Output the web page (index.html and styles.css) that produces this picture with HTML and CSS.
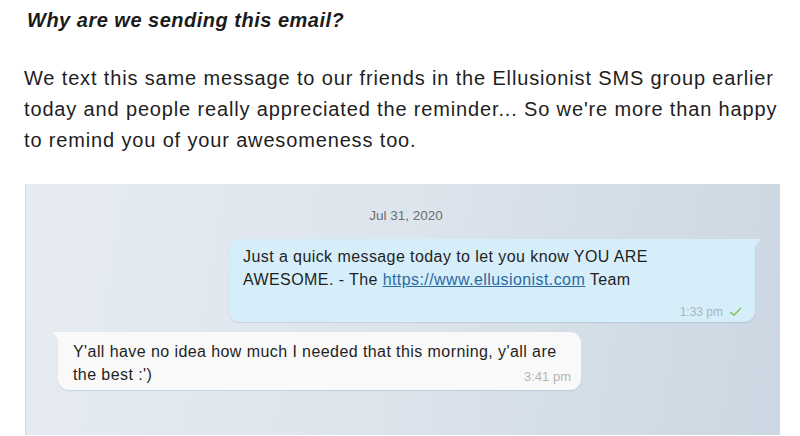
FILE: index.html
```html
<!DOCTYPE html>
<html>
<head>
    <meta charset="UTF-8">
    <title>Why are we sending this email?</title>
    <link rel="stylesheet" href="styles.css">
</head>
<body>
    <div class="email">
        <h2 class="email-title">Why are we sending this email?</h2>
        <p class="email-text">We text this same message to our friends in the Ellusionist SMS group earlier today and people really appreciated the reminder... So we're more than happy to remind you of your awesomeness too.</p>

        <div class="chat-shot">
            <div class="chat-date">Jul 31, 2020</div>

            <div class="bubble bubble-out">
                <div class="bubble-text">Just a quick message today to let you know YOU ARE<br>AWESOME. - The <a href="#">https://www.ellusionist.com</a> Team</div>
                <div class="bubble-meta">
                    <span class="bubble-time">1:33 pm</span>
                    <svg class="bubble-check" width="13" height="10" viewBox="0 0 13 10">
                        <polyline points="1.5,5.2 4.8,8.2 11.5,1.5" fill="none" stroke="#7cc457" stroke-width="1.4" stroke-linecap="round" stroke-linejoin="round"/>
                    </svg>
                </div>
            </div>

            <div class="bubble bubble-in">
                <div class="bubble-text">Y'all have no idea how much I needed that this morning, y'all are<br>the best :')<span class="bubble-time bubble-time-inline">3:41 pm</span></div>
            </div>
        </div>
    </div>
</body>
</html>
```

FILE: styles.css
```css
body {
    margin: 0;
    padding: 0;
    background-color: #fff;
    font-family: "Liberation Sans", Arial, sans-serif;
    color: #1d1d1d;
}
.email {
    padding: 9px 0 0 24px;
}
.email-title {
    margin: 0 0 0 3px;
    font-size: 20px;
    font-weight: bold;
    font-style: italic;
    letter-spacing: 0.5px;
    line-height: 22px;
    color: #1b1b1b;
}
.email-text {
    margin: 32px 0 0 0;
    font-size: 20px;
    line-height: 31px;
    letter-spacing: 0.85px;
    color: #1e1e1e;
}
.chat-shot {
    display: flex;
    flex-direction: column;
    margin: 28px 0 0 1px;
    width: 755px;
    height: 251px;
    box-sizing: border-box;
    padding-top: 24px;
    background: linear-gradient(100deg, #e7ecf2 0%, #dce4ec 50%, #cbd7e2 100%);
    border-left: 1px solid #d5dbe2;
}
.chat-date {
    text-align: center;
    font-size: 13.5px;
    line-height: 16px;
    color: #6e6e6e;
    padding-left: 6px;
}
.bubble {
    position: relative;
    box-sizing: border-box;
    border-radius: 11px;
    font-size: 16px;
    line-height: 23px;
    letter-spacing: 0.42px;
    color: #1f1f1f;
    box-shadow: 0 1px 1px rgba(90, 110, 130, 0.18);
}
.bubble-out {
    align-self: flex-end;
    width: 526px;
    margin: 15px 25px 0 0;
    padding: 6px 13px 2px 14px;
    background-color: #d6eefa;
    border-top-right-radius: 0;
}
.bubble-out::after {
    content: "";
    position: absolute;
    top: 0;
    right: -6px;
    border-top: 7px solid #d6eefa;
    border-right: 6px solid transparent;
}
.bubble-in {
    align-self: flex-start;
    width: 523px;
    margin: 10px 0 0 32px;
    padding: 8px 10px 4px 15px;
    background-color: #f9f9f9;
    border-top-left-radius: 0;
}
.bubble-in::before {
    content: "";
    position: absolute;
    top: 0;
    left: -5px;
    border-top: 7px solid #f9f9f9;
    border-left: 5px solid transparent;
}
.bubble-text a {
    color: #2b6aa5;
}
.bubble-meta {
    display: flex;
    justify-content: flex-end;
    align-items: center;
    gap: 6px;
    margin-top: 13px;
    line-height: 16px;
}
.bubble-time {
    font-size: 12px;
    letter-spacing: 0;
    color: #a9b4bc;
}
.bubble-time-inline {
    float: right;
    margin-top: 6px;
    font-size: 13px;
    line-height: 16px;
    color: #b5b5b5;
}
```
